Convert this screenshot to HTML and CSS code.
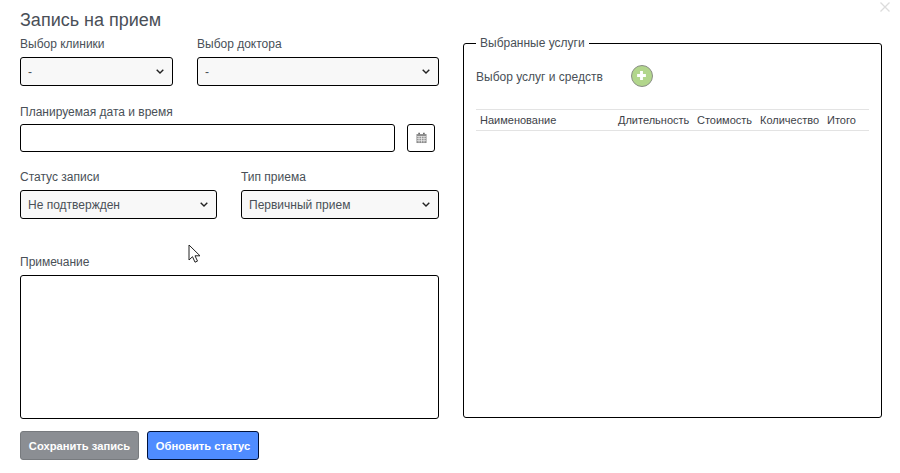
FILE: index.html
```html
<!DOCTYPE html>
<html lang="ru">
<head>
<meta charset="utf-8">
<title>Запись на прием</title>
<link rel="stylesheet" href="styles.css">
</head>
<body>
<main class="modal">
  <h1 class="title">Запись на прием</h1>
  <svg class="close" viewBox="0 0 10 10" width="10" height="10"><path d="M.5.5l9 9M9.500.5l-9 9" stroke="#dcdcdc" stroke-width="1.300" fill="none"/></svg>
  <div class="columns">
    <form class="left">
      <div class="row row-top">
        <div class="field w153">
          <span class="label">Выбор клиники</span>
          <div class="select"><span>-</span><svg class="chev" viewBox="0 0 8 5" width="8" height="5"><path d="M.7.7L4 4 7.300.7" stroke="#222" stroke-width="1.400" fill="none"/></svg></div>
        </div>
        <div class="field w242">
          <span class="label">Выбор доктора</span>
          <div class="select"><span>-</span><svg class="chev" viewBox="0 0 8 5" width="8" height="5"><path d="M.7.7L4 4 7.300.7" stroke="#222" stroke-width="1.400" fill="none"/></svg></div>
        </div>
      </div>
      <div class="field date-field">
        <span class="label">Планируемая дата и время</span>
        <div class="date-row">
          <div class="input"></div>
          <div class="cal-btn">
            <svg viewBox="0 0 12 12" width="11" height="12"><path d="M2.500.3h1.800v2.200h-1.800zM7.700.3h1.800v2.200h-1.800z" fill="#666"/><path d="M.5 1.700h11v9.800h-11z" fill="#8c8c8c"/><path d="M1 4.500h10M1 6.700h10M1 8.900h10M3.300 4v7M6 4v7M8.700 4v7" stroke="#f0f0f0" stroke-width=".8" fill="none"/></svg>
          </div>
        </div>
      </div>
      <div class="row row-status">
        <div class="field w197">
          <span class="label">Статус записи</span>
          <div class="select"><span>Не подтвержден</span><svg class="chev" viewBox="0 0 8 5" width="8" height="5"><path d="M.7.7L4 4 7.300.7" stroke="#222" stroke-width="1.400" fill="none"/></svg></div>
        </div>
        <div class="field w198">
          <span class="label">Тип приема</span>
          <div class="select"><span>Первичный прием</span><svg class="chev" viewBox="0 0 8 5" width="8" height="5"><path d="M.7.7L4 4 7.300.7" stroke="#222" stroke-width="1.400" fill="none"/></svg></div>
        </div>
      </div>
      <div class="field note-field">
        <span class="label">Примечание</span>
        <div class="textarea"></div>
      </div>
    </form>
    <fieldset class="services">
      <legend>Выбранные услуги</legend>
      <div class="picker">
        <span>Выбор услуг и средств</span>
        <span class="add"><svg viewBox="0 0 10 10" width="11" height="11"><path d="M5 1v8M1 5h8" stroke="#fff" stroke-width="2.600" fill="none"/></svg></span>
      </div>
      <div class="thead">
        <span class="c-name">Наименование</span>
        <span class="c-dur">Длительность</span>
        <span class="c-cost">Стоимость</span>
        <span class="c-qty">Количество</span>
        <span class="c-sum">Итого</span>
      </div>
    </fieldset>
  </div>
  <div class="actions">
    <button type="button" class="btn btn-grey">Сохранить запись</button>
    <button type="button" class="btn btn-blue">Обновить статус</button>
  </div>
  <svg class="cursor" viewBox="0 0 14 20" width="14" height="20"><path d="M1 1v15l3.500-3.300 2.500 5.500 2.500-1.100-2.500-5.300h5z" fill="#fff" stroke="#222" stroke-width="1"/></svg>
</main>
</body>
</html>
```
FILE: styles.css
```css
* { box-sizing: border-box; }
html, body { margin: 0; height: 100%; background: #fff; }
body { font-family: "Liberation Sans", Arial, sans-serif; color: #495057; font-size: 12px; overflow: hidden; }
.modal { position: relative; width: 900px; height: 473px; padding: 10px 18px 0 20px; }
.title { margin: 0; font-size: 18px; font-weight: 400; line-height: 21px; color: #4a4f57; }
.close { position: absolute; top: 2px; left: 880px; }
.columns { display: flex; gap: 24px; margin-top: 4px; }
.left { width: 419px; display: flex; flex-direction: column; }
.row { display: flex; }
.row-top { gap: 24px; }
.row-status { gap: 24px; margin-top: 16px; }
.field { display: flex; flex-direction: column; }
.label { line-height: 14px; margin-top: 2px; margin-bottom: 6px; }
.w153 { width: 153px; }
.w242 { width: 242px; }
.w197 { width: 197px; }
.w198 { width: 198px; }
.select { height: 29px; border: 1px solid #000; border-radius: 3px; background: #f8f8f8; display: flex; align-items: center; justify-content: space-between; padding: 0 8px 0 7px; }
.date-field { margin-top: 17px; }
.date-field .label { margin-bottom: 5px; }
.date-row { display: flex; gap: 12px; }
.input { width: 375px; height: 28px; border: 1px solid #000; border-radius: 3px; }
.cal-btn { width: 28px; height: 28px; border: 1px solid #000; border-radius: 3px; display: flex; align-items: center; justify-content: center; }
.note-field { margin-top: 34px; }
.note-field .label { margin-bottom: 6px; }
.textarea { height: 144px; border: 1px solid #000; border-radius: 3px; }
.services { width: 419px; height: 382px; margin: 1px 0 0; padding: 0 12px; border: 1px solid #000; border-radius: 3px; min-width: 0; }
.services legend { padding: 0 4px; margin-left: 0; line-height: 14px; }
.picker { display: flex; align-items: center; margin-top: 15px; height: 24px; }
.add { margin: -3px 0 0 28px; width: 22px; height: 22px; border-radius: 50%; background: #b2d68c; border: 1px solid #8a8f86; display: flex; align-items: center; justify-content: center; }
.thead { display: flex; align-items: center; height: 22px; margin-top: 20px; border-top: 1px solid #e3e3e3; border-bottom: 1px solid #e3e3e3; color: #3d4248; font-size: 11px; }
.c-name { margin-left: 4px; width: 138px; }
.c-dur { width: 79px; }
.c-cost { width: 63px; }
.c-qty { width: 67px; }
.actions { display: flex; gap: 8px; margin-top: 12px; }
.btn { height: 29px; border-radius: 3px; padding: 0; font: 700 11.200px "Liberation Sans", Arial, sans-serif; color: #fff; }
.btn-grey { width: 119px; background: #8b8e93; border: 1px solid #777a7e; }
.btn-blue { width: 112px; background: #4f8cff; border: 1px solid #00123a; }
.cursor { position: absolute; left: 188px; top: 244px; }
```
